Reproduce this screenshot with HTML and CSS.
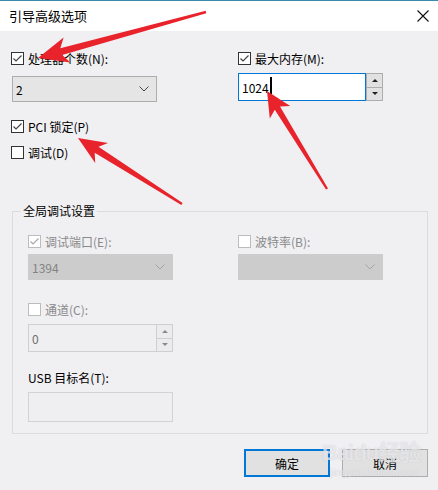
FILE: index.html
```html
<!DOCTYPE html>
<html>
<head>
    <title>引导高级选项</title>
    <link rel="stylesheet" href="styles.css">
</head>
<body>
<div class="dlg">
    <div class="titlebar">
        <span class="title">引导高级选项</span>
        <svg class="close" width="12" height="12" viewBox="0 0 12 12">
            <path d="M0.5 0.5 L11.5 11.5 M11.5 0.5 L0.5 11.5" stroke="#111" stroke-width="1.1" fill="none"/>
        </svg>
    </div>

    <div class="main">
        <div class="cols">
            <div class="col">
                <label class="chk"><span class="box"><svg viewBox="0 0 11 11"><path d="M1.5 5.5 L4 8 L9.5 2.5" /></svg></span>处理器个数(N):</label>
                <div class="select cpu"><span>2</span><svg class="chev" viewBox="0 0 10 6"><path d="M0.5 0.5 L5 5 L9.5 0.5" /></svg></div>
            </div>
            <div class="col">
                <label class="chk"><span class="box"><svg viewBox="0 0 11 11"><path d="M1.5 5.5 L4 8 L9.5 2.5" /></svg></span>最大内存(M):</label>
                <div class="spin mem">
                    <div class="spin-text">1024<span class="caret"></span></div>
                    <div class="spin-btns"><span><i class="up"></i></span><span><i class="down"></i></span></div>
                </div>
            </div>
        </div>

        <label class="chk pci"><span class="box"><svg viewBox="0 0 11 11"><path d="M1.5 5.5 L4 8 L9.5 2.5" /></svg></span>PCI 锁定(P)</label>
        <label class="chk dbg"><span class="box"></span>调试(D)</label>

        <div class="group">
            <span class="group-title">全局调试设置</span>
            <div class="cols">
                <div class="col inner">
                    <label class="chk off"><span class="box"><svg viewBox="0 0 11 11"><path d="M1.5 5.5 L4 8 L9.5 2.5" /></svg></span>调试端口(E):</label>
                    <div class="select dis"><span>1394</span><svg class="chev" viewBox="0 0 10 6"><path d="M0.5 0.5 L5 5 L9.5 0.5" /></svg></div>
                </div>
                <div class="col">
                    <label class="chk off"><span class="box"></span>波特率(B):</label>
                    <div class="select dis"><span></span><svg class="chev" viewBox="0 0 10 6"><path d="M0.5 0.5 L5 5 L9.5 0.5" /></svg></div>
                </div>
            </div>

            <label class="chk off chan"><span class="box"></span>通道(C):</label>
            <div class="spin chan-box">
                <div class="spin-text">0</div>
                <div class="spin-btns"><span><i class="up"></i></span><span><i class="down"></i></span></div>
            </div>

            <div class="usb-label">USB 目标名(T):</div>
            <div class="textbox"></div>
        </div>

        <div class="buttons">
            <button class="btn default">确定</button>
            <button class="btn">取消</button>
        </div>
    </div>

    <!-- red callout arrows -->
    <svg class="arrows" width="438" height="490" viewBox="0 0 438 490">
        <polygon points="38,58 70.4,62.6 62.1,55.1 206.3,13.2 205.7,10.8 60.3,48.3 63.6,37.6" />
        <polygon points="78,138 95.2,163.1 94.7,152.8 181.4,205 182.6,203 98.5,146.8 108,142.9" />
        <polygon points="267,91 269.8,118.6 274.8,109.7 326,189.6 328,188.4 280,106.5 290.2,106" />
    </svg>

    <div class="watermark">
        <div class="wm-logo">Bai<span class="paw">du</span>经验</div>
        <div class="wm-url">jingyan.baidu.com</div>
    </div>
</div>
</body>
</html>
```

FILE: styles.css
```css
body { margin: 0; background: #f0f0f0; font-family: "Noto Sans CJK SC", "Noto Sans", sans-serif; font-size: 12px; color: #000; }

.dlg { position: relative; width: 438px; height: 490px; background: #f0eff2; overflow: hidden; }

.titlebar { height: 30px; border-top: 1px solid #3a8ab0; background: #fff; display: flex; align-items: center; justify-content: space-between; padding: 0 8px 0 9px; }
.title { font-size: 13px; line-height: 16px; margin-top: -1px; }
.close { margin-right: 1px; margin-top: -1px; }

.main { padding: 21px 10px 0 11px; }

.cols { display: grid; grid-template-columns: 227px 1fr; }
.col { display: flex; flex-direction: column; align-items: flex-start; }

/* checkboxes */
.chk { display: flex; align-items: center; height: 13px; line-height: 13px; white-space: nowrap; }
.box { width: 11px; height: 11px; border: 1px solid #333; background: #fff; margin-right: 4px; display: flex; }
.box svg { width: 11px; height: 11px; }
.box path { fill: none; stroke: #444; stroke-width: 1.2; }
.chk.off { color: #8a8a8a; }
.chk.off .box { border-color: #bcbcbc; }
.chk.off .box path { stroke: #a8a8a8; }

.pci { margin-top: 18px; }
.dbg { margin-top: 13px; }

/* combo boxes */
.select { box-sizing: border-box; width: 145px; height: 26px; margin-top: 11px; margin-left: 1px; border: 1px solid #adadad; background: #e5e5e5; display: flex; align-items: center; justify-content: space-between; padding: 0 7px 0 3px; }
.chev { width: 10px; height: 6px; }
.chev path { fill: none; stroke: #444; stroke-width: 1; }
.select.dis { margin-top: 6px; margin-left: 0; background: #cccccc; border-color: #cccccc; color: #838383; }
.select.dis .chev path { stroke: #a5a5a5; }

/* spin boxes */
.spin { display: flex; height: 28px; }
.spin-text { box-sizing: border-box; height: 100%; display: flex; align-items: center; padding-left: 3px; }
.spin-btns { display: flex; flex-direction: column; width: 17px; }
.spin-btns span { flex: 1; box-sizing: border-box; border: 1px solid #adadad; background: #e1e1e1; display: flex; align-items: center; justify-content: center; }
.spin-btns span + span { border-top: none; }
.up { width: 0; height: 0; border-left: 3px solid transparent; border-right: 3px solid transparent; border-bottom: 3px solid #222; }
.down { width: 0; height: 0; border-left: 3px solid transparent; border-right: 3px solid transparent; border-top: 3px solid #222; }

.mem { margin-top: 8px; }
.mem .spin-text { width: 128px; border: 1px solid #0078d7; background: #fff; }
.caret { display: inline-block; width: 2px; height: 21px; background: #000; margin-left: 1px; }

.chan-box { margin-top: 8px; }
.chan-box .spin-text { width: 128px; border: 1px solid #cfcfcf; border-right: none; background: #efeef1; color: #6d6d6d; }
.chan-box .spin-btns span { border-color: #cfcfcf; background: #ececee; }
.chan-box .up { border-bottom-color: #8a8a8a; }
.chan-box .down { border-top-color: #8a8a8a; }

/* global debug settings group */
.group { position: relative; margin-top: 52px; margin-left: 1px; border: 1px solid #dcdcdc; padding: 23px 0 11px 15px; }
.group-title { position: absolute; top: -8px; left: 8px; padding: 0 2px; background: #f0eff2; line-height: 14px; }
.group .cols { grid-template-columns: 210px 1fr; }
.chan { margin-top: 23px; }
.usb-label { margin-top: 19px; line-height: 14px; }
.textbox { box-sizing: border-box; width: 145px; height: 30px; margin-top: 7px; border: 1px solid #d3d3d3; background: #efeef1; }

/* dialog buttons */
.buttons { display: flex; justify-content: flex-end; gap: 12px; margin-top: 15px; }
.btn { box-sizing: border-box; width: 86px; height: 28px; border: 1px solid #adadad; background: #e1e1e1; font-family: inherit; font-size: 12px; color: #000; padding: 0; }
.btn.default { border: 2px solid #0078d7; }

.arrows { position: absolute; left: 0; top: 0; pointer-events: none; }
.arrows polygon { fill: #e8232b; }

.watermark { position: absolute; left: 322px; top: 440px; pointer-events: none; color: rgba(255, 255, 255, 0.6); text-shadow: 0 0 1px rgba(140, 140, 155, 0.45); }
.wm-logo { font-family: "Liberation Sans", "Noto Sans CJK SC", sans-serif; font-size: 22px; font-weight: bold; line-height: 26px; letter-spacing: -1px; }
.wm-url { font-family: "Liberation Sans", sans-serif; font-size: 11px; line-height: 12px; margin-left: 8px; }
```
